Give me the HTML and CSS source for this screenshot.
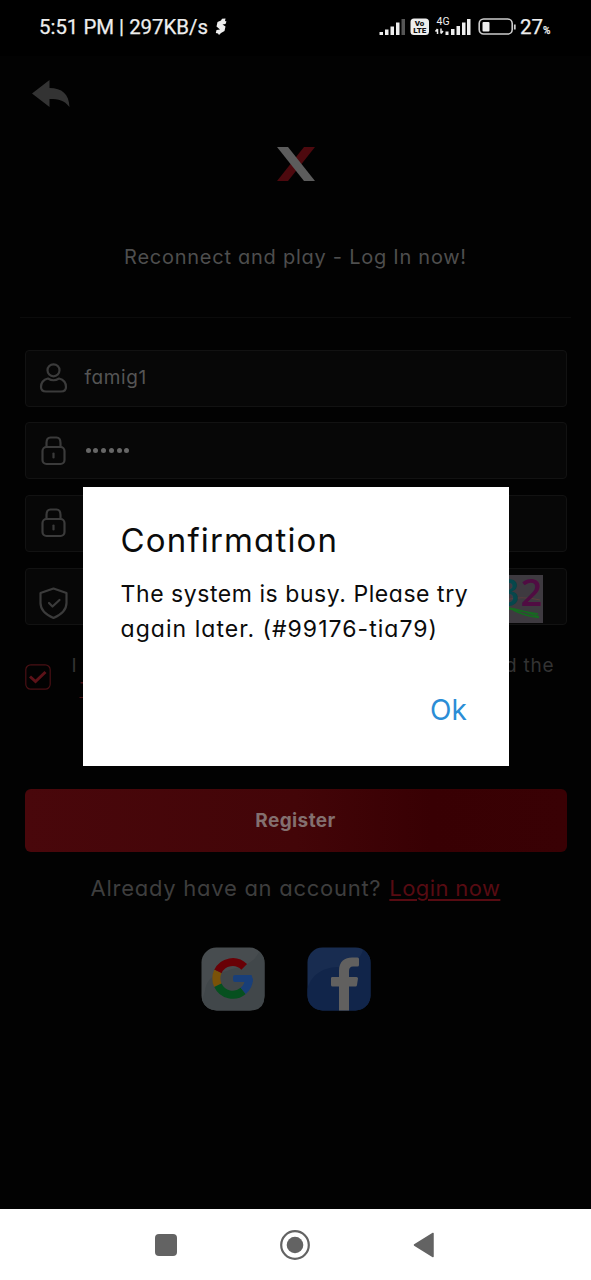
FILE: index.html
```html
<!DOCTYPE html>
<html lang="en">
<head>
<meta charset="utf-8">
<title>Register</title>
<link rel="stylesheet" href="styles.css">
</head>
<body>
<div class="phone">
  <header class="status">
    <span class="clock">5:51 PM | 297KB/s</span>
    <svg class="bolt" width="12" height="18" viewBox="0 0 12 18"><path d="M7 .8L10.500 .5L10 3L11.500 3.500L10.500 6L7.500 6.500L10.500 8.500L9.500 13L6 15L4 17L3 15.500L.8 15L1.500 12L5 11.500L1.500 8.500L2.500 4L6 2.500Z" fill="#eee"/></svg>
    <svg class="signals" width="96" height="26" viewBox="378 14 96 26">
      <g fill="#eee"><path d="M379.5 32h3.500v3h-3.500zM385 29.500h3.500v5.500H385zM390.500 26.500h3.500v8.500h-3.500zM396 22.500h3.500v12.500H396z"/><path d="M401.500 19h3.500v16h-3.500z" fill="#555"/>
      <rect x="410.500" y="18.500" width="18.500" height="16.500" rx="3.500"/>
      <path d="M445.500 31.500h3v3.500h-3zM451 29h3.500v6H451zM456.500 26h3.500v9h-3.500zM462 22.500h3.500v12.500H462zM467 19h3.500v16H467z"/>
      <path d="M437.500 34V29M435.500 31.500L437.500 29M441 28.500V33.500M441 33.500L443 31" stroke="#eee" stroke-width="1.500" fill="none"/></g>
      <text x="419.500" y="26" class="volte">Vo</text><text x="419.700" y="33.300" class="volte">LTE</text>
      <text x="436.500" y="25" class="net">4G</text>
    </svg>
    <svg class="battery" width="40" height="20" viewBox="0 0 40 20"><rect x="1.200" y="2" width="33" height="15" rx="4.500" fill="none" stroke="#ccc" stroke-width="1.600"/><rect x="4.500" y="5" width="7" height="9.500" rx="1" fill="#eee"/><path d="M36.800 7.500v5" stroke="#ccc" stroke-width="1.800"/></svg>
    <span class="level">27<small>%</small></span>
  </header>

  <main class="page">
    <svg class="back" width="39" height="28" viewBox="0 0 39 28"><path d="M0 13.500L17.500 0V8C30 8 37 14 37.500 27C32 20 27 19 17.500 19V27Z" fill="#333"/></svg>
    <svg class="logo" width="40" height="36" viewBox="0 0 40 36"><path d="M28 1h11L12 35H1Z" fill="#4d090e"/><path d="M1 1h11l27 34H28Z" fill="#5c5c5c"/></svg>
    <p class="tagline">Reconnect and play - Log In now!</p>
    <div class="rule"></div>
    <form class="form">
      <div class="field">
        <svg class="icon" width="30" height="32" viewBox="0 0 30 32"><circle cx="14.500" cy="8.300" r="6"/><path d="M9 16.500C3 18 2 22 2 25Q2 29.500 7 29.500H22Q27 29.500 27 25C27 22 26 18 20 16.500Q14.500 20 9 16.500Z"/></svg>
        <span class="value">famig1</span>
      </div>
      <div class="field">
        <svg class="icon" width="30" height="32" viewBox="0 0 30 32"><path d="M7.500 12V8Q7.500 2.500 11.500 2.500H17.500Q21.500 2.500 21.500 8V12"/><rect x="3.500" y="12" width="22" height="17" rx="4"/><path d="M14.500 18.500v4"/></svg>
        <span class="dots"><i></i><i></i><i></i><i></i><i></i><i></i></span>
      </div>
      <div class="field">
        <svg class="icon" width="30" height="32" viewBox="0 0 30 32"><path d="M7.500 12V8Q7.500 2.500 11.500 2.500H17.500Q21.500 2.500 21.500 8V12"/><rect x="3.500" y="12" width="22" height="17" rx="4"/><path d="M14.500 18.500v4"/></svg>
      </div>
      <div class="field">
        <svg class="icon shield" width="30" height="32" viewBox="0 0 30 32"><path d="M14.500 1.500L27.500 6V16C27.500 23 21.500 28 14.500 31C7.500 28 1.500 23 1.500 16V6Z"/><path d="M10 16L13.500 19.500L20.500 13"/></svg>
        <svg class="captcha" width="100" height="48" viewBox="0 0 100 48"><rect width="100" height="48" fill="#3e3a40"/><path d="M60 26Q76 20 97 25" stroke="#5a3d3d" stroke-width="1.200" fill="none"/><text x="54.500" y="30.500" fill="#06474c">3</text><text x="77.500" y="30.500" fill="#500c42">2</text><path d="M60 32Q78 34 96 42M60 33Q78 36 95 39M70 35Q82 41 96 42.500" stroke="#166a20" stroke-width="1.500" fill="none"/></svg>
      </div>
      <div class="terms">
        <svg class="check" width="26" height="26" viewBox="0 0 26 26"><rect x=".8" y=".8" width="24.400" height="24.400" rx="5" fill="none" stroke="#4a1014" stroke-width="1.200"/><path d="M5 12.500L10.500 17.500L20.500 8" fill="none" stroke="#5c1218" stroke-width="3"/></svg>
        <div class="terms-copy"><div class="terms-line"><span>I</span><span>d the</span></div><a>Terms and Conditions</a></div>
      </div>
      <button type="button" class="register">Register</button>
    </form>
    <p class="login"><span>Already have an account?</span><a>Login now</a></p>
    <div class="social">
      <svg width="64" height="64" viewBox="0 0 64 64"><rect x=".5" y=".5" width="63" height="63" rx="15" fill="#474c4f"/><path d="M4 44C6 28 18 27 31 22C45 19 54 14 58 5Q63.500 9 63.500 16V49Q63.500 63.500 49 63.500H16Q5 63.500 1 53Z" fill="#41474a"/>
        <g fill="none" stroke-width="8"><path d="M43.200 19.900A16.300 16.300 0 0 0 16.900 24.500" stroke="#690006"/><path d="M16.900 24.500A16.300 16.300 0 0 0 16.900 38.300" stroke="#7a5208"/><path d="M16.900 38.300A16.300 16.300 0 0 0 42.200 43.900" stroke="#06501f"/><path d="M42.200 43.900A16.300 16.300 0 0 0 48 31.500" stroke="#193f79"/></g><path d="M34 28H50.500Q52 31 51.500 35H34Q32 35 32 33V30Q32 28 34 28Z" fill="#193f79"/></svg>
      <svg width="64" height="64" viewBox="0 0 64 64"><defs><clipPath id="tile"><rect x=".5" y=".5" width="63" height="63" rx="15"/></clipPath></defs><g clip-path="url(#tile)"><rect width="64" height="64" fill="#182c50"/><path d="M0 43C5 25 19 20 33 20C47 18 54 12 57 0H64V64H0Z" fill="#11254a"/><path d="M32 64V39.500H25.500Q24 39.500 24 38V31Q24 30 25.500 30H32V24C32 14 38 10.500 45 10.500H50.500Q52 10.500 52 12V18Q52 19.500 50.500 19.500H46Q42 19.500 42 24V30H49.500Q51 30 51 31.500L50 38Q49.800 39.500 48.500 39.500H42V64Z" fill="#61605f"/></g></svg>
    </div>
  </main>

  <nav class="nav">
    <svg width="22" height="22" viewBox="0 0 22 22"><rect width="22" height="22" rx="4" fill="#636363"/></svg>
    <svg width="30" height="30" viewBox="0 0 30 30"><circle cx="15" cy="15" r="13.800" fill="none" stroke="#636363" stroke-width="2.200"/><circle cx="15" cy="15" r="8.300" fill="#636363"/></svg>
    <svg width="22" height="26" viewBox="0 0 22 26"><path d="M1.500 13L20 1.500V24.500Z" fill="#636363" stroke="#636363" stroke-width="1.500" stroke-linejoin="round"/></svg>
  </nav>

  <section class="dialog" role="dialog">
    <h1>Confirmation</h1>
    <p><span class="first">The system is busy. Please try</span><br><span class="second">again later. (#99176-tia79)</span></p>
    <div class="actions"><a>Ok</a></div>
  </section>
</div>
</body>
</html>
```
FILE: styles.css
```css
* { box-sizing: border-box; }
body { margin: 0; background: #020202; font-family: Inter, "Open Sans", sans-serif; font-feature-settings: "cv11"; }
p, h1 { margin: 0; font-weight: 400; white-space: nowrap; }
svg { display: block; flex: none; }
.phone { position: relative; width: 591px; height: 1280px; display: flex; flex-direction: column; overflow: hidden; }

.status { height: 56px; display: flex; align-items: center; padding: 0 0 2px 39px; color: #eee; font-family: Roboto, sans-serif; font-size: 20.4px; background: #000; white-space: nowrap; }
.clock { width: 169px; -webkit-text-stroke: .25px #eee; }
.bolt { margin-left: 7px; }
.signals { margin-left: 151px; }
.volte { font: 900 8px Roboto, sans-serif; text-anchor: middle; fill: #111; }
.net { font: 10.5px Roboto, sans-serif; fill: #eee; }
.battery { margin-left: 4px; }
.level { margin-left: 2px; font-size: 20.5px; -webkit-text-stroke: .25px #eee; }
.level small { font-size: 10px; font-weight: 500; }

.page { flex: 1; display: flex; flex-direction: column; align-items: center; }
.back { align-self: flex-start; margin: 24px 0 0 32px; }
.logo { margin-top: 38px; }
.tagline { margin-top: 60px; height: 30px; line-height: 30px; font-size: 20px; letter-spacing: .74px; color: #4e4e4e; }
.rule { width: 551px; height: 1px; margin-top: 45px; background: #0b0b0b; }
.form { width: 542px; margin-top: 31.5px; display: flex; flex-direction: column; gap: 15.7px; }
.field { height: 57px; display: flex; align-items: center; padding: 0 23px 0 13px; border: 1px solid #121212; border-radius: 4px; background: #070707; }
.icon { fill: none; stroke: #3b3b3b; stroke-width: 2.2; stroke-linecap: round; stroke-linejoin: round; }
.value { margin: -2px 0 0 16px; font-size: 19px; letter-spacing: .6px; color: #555; }
.dots { display: flex; gap: 2.8px; margin-left: 17px; }
.dots i { width: 5px; height: 5px; border-radius: 50%; background: #666; }
.shield { margin-top: 13px; }
.captcha { margin: 5px 0 0 auto; font: 600 38px "Open Sans", sans-serif; }
.terms { height: 58px; display: flex; gap: 21px; padding-top: 15px; margin-top: 9px; }
.terms-copy { width: 483px; margin-top: -10px; font-size: 19px; line-height: 24px; letter-spacing: .8px; color: #333; }
.terms-line { display: flex; justify-content: space-between; }
.terms-copy a { margin-left: 8px; color: #4a1014; text-decoration: underline; }
.register { height: 63px; margin-top: 66.5px; border: 0; border-radius: 6px; font: 700 19px Inter, sans-serif; font-feature-settings: "cv11"; letter-spacing: .4px; color: #83706f; background: linear-gradient(90deg, #49070b 0%, #430508 50%, #380003 75%, #390104 100%); }
.login { display: flex; gap: 8px; margin-top: 19px; height: 34px; line-height: 34px; font-size: 22px; letter-spacing: .73px; color: #3e3e3e; }
.login a { letter-spacing: .4px; color: #570b12; text-decoration: underline; text-decoration-thickness: 1.5px; text-underline-offset: 3px; }
.social { display: flex; gap: 42px; margin: 42px 0 0 -19px; }

.nav { flex: none; height: 71px; background: #fff; display: flex; align-items: center; padding-left: 155px; gap: 103px; }
.nav svg:last-child { margin-left: 0; }

.dialog { position: absolute; left: 82.6px; top: 487px; width: 426.2px; height: 279px; padding: 31px 38px; background: #fff; color: #0b0b0b; display: flex; flex-direction: column; }
.dialog h1 { height: 44px; line-height: 44px; font-size: 33px; letter-spacing: 1.15px; }
.dialog p { margin-top: 14.5px; font-size: 23px; line-height: 35px; }
.first { letter-spacing: .55px; }
.second { letter-spacing: 1.03px; }
.actions { margin: 45px 4px 0 0; align-self: flex-end; color: #2b8dd6; font-size: 28px; line-height: 36px; }
```
